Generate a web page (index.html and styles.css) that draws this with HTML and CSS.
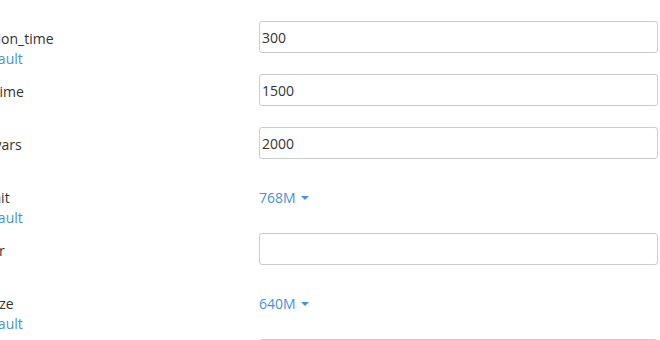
FILE: index.html
```html
<!DOCTYPE html>
<html>
<head>
<meta charset="utf-8">
<link rel="stylesheet" href="styles.css">
</head>
<body>
<div class="form">
  <div class="row">
    <div class="label"><span class="name">max_input_nesting_level</span></div>
    <div class="field"><input class="input" type="text" value="64"></div>
  </div>
  <div class="row">
    <div class="label"><span class="name">max_execution_time</span><a class="default">Reset to default</a></div>
    <div class="field"><input class="input" type="text" value="300"></div>
  </div>
  <div class="row">
    <div class="label"><span class="name">max_input_time</span></div>
    <div class="field"><input class="input" type="text" value="1500"></div>
  </div>
  <div class="row">
    <div class="label"><span class="name">max_input_vars</span></div>
    <div class="field"><input class="input" type="text" value="2000"></div>
  </div>
  <div class="row">
    <div class="label"><span class="name">memory_limit</span><a class="default">Reset to default</a></div>
    <div class="field"><span class="select">768M <span class="caret"></span></span></div>
  </div>
  <div class="row">
    <div class="label"><span class="name">sys_temp_dir</span></div>
    <div class="field"><input class="input" type="text" value=""></div>
  </div>
  <div class="row">
    <div class="label"><span class="name">post_max_size</span><a class="default">Reset to default</a></div>
    <div class="field"><span class="select">640M <span class="caret"></span></span></div>
  </div>
  <div class="row">
    <div class="label"><span class="name">upload_max_filesize</span></div>
    <div class="field"><input class="input" type="text" value="640M"></div>
  </div>
</div>
</body>
</html>
```
FILE: styles.css
```css
html, body {
  margin: 0;
  padding: 0;
  background: #fff;
  overflow: hidden;
}
body {
  font-family: "Open Sans", "DejaVu Sans", sans-serif;
  font-size: 14px;
  color: #333;
}
.form {
  display: flex;
  flex-direction: column;
  gap: 21px;
  margin-top: -32px;
  margin-left: -80px;
}
.row {
  display: flex;
  height: 32px;
}
.label {
  width: 339px;
  flex: none;
  padding-top: 8px;
  line-height: 20px;
  display: flex;
  flex-direction: column;
  align-items: flex-start;
  white-space: nowrap;
}
.default {
  color: #4a90d9;
  cursor: pointer;
}
.field {
  width: 399px;
  flex: none;
}
.input {
  box-sizing: border-box;
  width: 100%;
  height: 32px;
  margin: 0;
  padding: 0 2px;
  border: 1px solid #ccc;
  border-radius: 3px;
  font: inherit;
  color: #333;
  background: #fff;
  outline: none;
}
.select {
  display: inline-flex;
  align-items: center;
  gap: 5px;
  padding-top: 8px;
  line-height: 20px;
  color: #4a90d9;
}
.caret {
  width: 0;
  height: 0;
  border-left: 4px solid transparent;
  border-right: 4px solid transparent;
  border-top: 4px solid #4a90d9;
}
```
